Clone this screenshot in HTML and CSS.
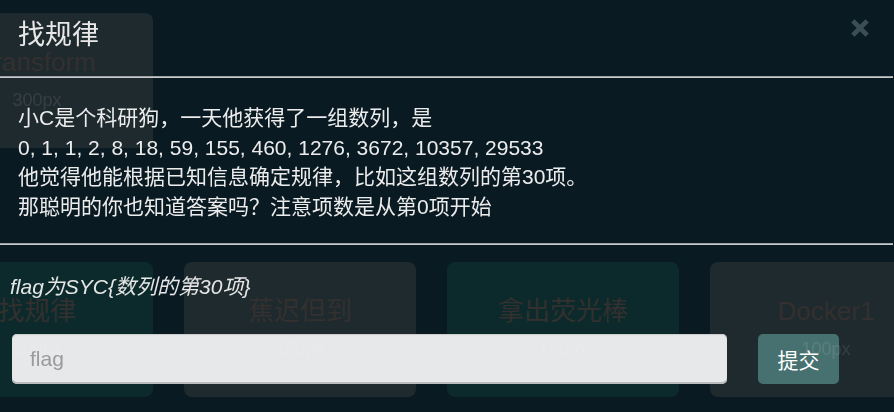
FILE: index.html
```html
<!DOCTYPE html>
<html lang="zh-CN">
<head>
<meta charset="utf-8">
<title>找规律</title>
<link rel="stylesheet" href="styles.css">
</head>
<body>
<div class="board">
  <div class="row row-first">
    <div class="card card-gray">
      <div class="card-title">Transform</div>
      <div class="card-score">300px</div>
    </div>
  </div>
  <div class="row row-second">
    <div class="card card-teal">
      <div class="card-title">找规律</div>
      <div class="card-score">100px</div>
    </div>
    <div class="card card-gray">
      <div class="card-title">蕉迟但到</div>
      <div class="card-score">150px</div>
    </div>
    <div class="card card-teal">
      <div class="card-title">拿出荧光棒</div>
      <div class="card-score">100px</div>
    </div>
    <div class="card card-gray">
      <div class="card-title">Docker1</div>
      <div class="card-score">100px</div>
    </div>
  </div>
</div>

<div class="modal">
  <div class="modal-header">
    <h4 class="modal-title">找规律</h4>
    <button class="close" type="button" aria-label="Close">
      <svg width="18" height="18" viewBox="0 0 18 18"><path d="M3.5 3.5 L14.5 14.5 M14.5 3.5 L3.5 14.5" stroke="#3b4e56" stroke-width="4.6" stroke-linecap="square" fill="none"/></svg>
    </button>
  </div>
  <div class="rule"></div>
  <div class="modal-body">
    <p>小C是个科研狗，一天他获得了一组数列，是</p>
    <p>0, 1, 1, 2, 8, 18, 59, 155, 460, 1276, 3672, 10357, 29533</p>
    <p>他觉得他能根据已知信息确定规律，比如这组数列的第30项。</p>
    <p>那聪明的你也知道答案吗？注意项数是从第0项开始</p>
  </div>
  <div class="rule"></div>
  <div class="modal-footer">
    <p class="hint">flag为SYC{数列的第30项}</p>
    <form class="submit-row">
      <input class="flag-input" type="text" placeholder="flag">
      <button class="submit-btn" type="button">提交</button>
    </form>
  </div>
</div>
</body>
</html>
```

FILE: styles.css
```css
* { box-sizing: border-box; }

html, body {
  margin: 0;
  padding: 0;
  width: 894px;
  height: 412px;
  overflow: hidden;
}

body {
  background: #0a1a22;
  font-family: "Liberation Sans", "Noto Sans CJK SC", sans-serif;
  color: #ebebeb;
}

/* background challenge board */
.board {
  padding-top: 13px;
  margin-left: -79px;
}

.row {
  display: flex;
  gap: 31px;
}

.row-second {
  margin-top: 114px;
}

.card {
  width: 232px;
  height: 135px;
  flex: none;
  border-radius: 8px;
  padding-top: 30px;
  display: flex;
  flex-direction: column;
  align-items: center;
}

.card-gray { background: #1f2a2e; }
.card-teal { background: #0c2a2b; }

.card-title {
  font-size: 26px;
  line-height: 38px;
  color: #33302f;
  white-space: nowrap;
}

.card-score {
  margin-top: 8px;
  font-size: 18px;
  line-height: 22px;
  color: rgba(255, 255, 255, 0.1);
  position: relative;
  z-index: 20;
}

/* modal overlay */
.modal {
  position: fixed;
  inset: 0;
  z-index: 10;
}

.modal-header {
  height: 76px;
  display: flex;
  justify-content: space-between;
  align-items: flex-start;
  padding: 18px 25px 0 18px;
}

.modal-title {
  margin: 0;
  font-size: 27px;
  line-height: 34px;
  font-weight: normal;
  color: #e8e8e8;
}

.close {
  margin: 1px 0 0 0;
  padding: 0;
  border: 0;
  background: none;
  width: 18px;
  height: 18px;
  display: block;
}

.close svg { display: block; }

.rule {
  height: 2px;
  margin-right: 1px;
  background: #c7cacb;
  border-top: 1px solid #9ea3a5;
}

.modal-body {
  padding: 25px 18px 22px 18px;
}

.modal-body p {
  margin: 0;
  font-size: 21px;
  line-height: 29.5px;
  color: #ececec;
  white-space: nowrap;
}

.modal-footer {
  padding: 27px 0 0 0;
}

.hint {
  margin: 0 0 0 10px;
  font-size: 21px;
  line-height: 30px;
  font-style: italic;
  color: #e6e6e6;
}

.submit-row {
  margin: 32px 0 0 12px;
  display: flex;
  gap: 31px;
}

.flag-input {
  width: 715px;
  height: 50px;
  border: 0;
  border-radius: 5px;
  background: #e6e8e9;
  box-shadow: inset 0 1px 1px #c9cbcc, inset 0 -2px 0 #b9bbbc;
  padding: 0 18px;
  font-family: "Liberation Sans", "Noto Sans CJK SC", sans-serif;
  font-size: 21px;
  color: #555;
  outline: none;
}

.flag-input::placeholder { color: #9a9a9a; }

.submit-btn {
  width: 81px;
  height: 50px;
  border: 0;
  border-radius: 5px;
  background: #477170;
  color: #ffffff;
  font-family: "Liberation Sans", "Noto Sans CJK SC", sans-serif;
  font-size: 21px;
  padding: 0;
}
```
